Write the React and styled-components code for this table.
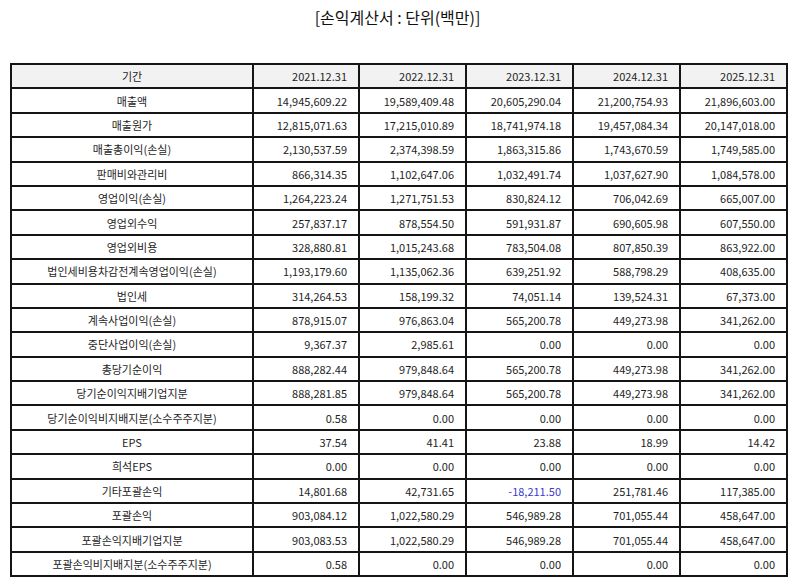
import React from "react";
import styled, { createGlobalStyle } from "styled-components";

const Global = createGlobalStyle`
  html, body { margin: 0; padding: 0; background: #fff; }
  body { font-family: "Noto Sans CJK KR", "Noto Sans", sans-serif; color: #222; }
`;

const Page = styled.div`
  width: 794px;
  height: 586px;
  padding: 0 9px 0 10px;
  box-sizing: border-box;
  display: flex;
  flex-direction: column;
`;

const Title = styled.h1`
  margin: 0;
  height: 63px;
  padding-top: 5px;
  box-sizing: border-box;
  font-size: 16px;
  font-weight: 400;
  text-align: center;
  line-height: 24px;
  color: #111;
`;

const Table = styled.table`
  width: 776px;
  border-collapse: collapse;
  table-layout: fixed;
  font-size: 11px;
`;

const Row = styled.tr`
  height: 24.4px;
`;

const Cell = styled.td`
  border: 2px solid #151515;
  padding: ${(p) => (p.$label ? "0 4px" : "0 11px 0 6px")};
  text-align: ${(p) => (p.$label ? "center" : "right")};
  background: ${(p) => (p.$head ? "#f2f2f2" : "#fff")};
  color: ${(p) => (p.$neg ? "#3a3acc" : "#1e1e1e")};
  font-weight: 400;
  white-space: nowrap;
  line-height: 14px;
`;

const cols = [242, 106, 107, 107, 107, 107];

const header = ["기간", "2021.12.31", "2022.12.31", "2023.12.31", "2024.12.31", "2025.12.31"];

const rows = [
  ["매출액", "14,945,609.22", "19,589,409.48", "20,605,290.04", "21,200,754.93", "21,896,603.00"],
  ["매출원가", "12,815,071.63", "17,215,010.89", "18,741,974.18", "19,457,084.34", "20,147,018.00"],
  ["매출총이익(손실)", "2,130,537.59", "2,374,398.59", "1,863,315.86", "1,743,670.59", "1,749,585.00"],
  ["판매비와관리비", "866,314.35", "1,102,647.06", "1,032,491.74", "1,037,627.90", "1,084,578.00"],
  ["영업이익(손실)", "1,264,223.24", "1,271,751.53", "830,824.12", "706,042.69", "665,007.00"],
  ["영업외수익", "257,837.17", "878,554.50", "591,931.87", "690,605.98", "607,550.00"],
  ["영업외비용", "328,880.81", "1,015,243.68", "783,504.08", "807,850.39", "863,922.00"],
  ["법인세비용차감전계속영업이익(손실)", "1,193,179.60", "1,135,062.36", "639,251.92", "588,798.29", "408,635.00"],
  ["법인세", "314,264.53", "158,199.32", "74,051.14", "139,524.31", "67,373.00"],
  ["계속사업이익(손실)", "878,915.07", "976,863.04", "565,200.78", "449,273.98", "341,262.00"],
  ["중단사업이익(손실)", "9,367.37", "2,985.61", "0.00", "0.00", "0.00"],
  ["총당기순이익", "888,282.44", "979,848.64", "565,200.78", "449,273.98", "341,262.00"],
  ["당기순이익지배기업지분", "888,281.85", "979,848.64", "565,200.78", "449,273.98", "341,262.00"],
  ["당기순이익비지배지분(소수주주지분)", "0.58", "0.00", "0.00", "0.00", "0.00"],
  ["EPS", "37.54", "41.41", "23.88", "18.99", "14.42"],
  ["희석EPS", "0.00", "0.00", "0.00", "0.00", "0.00"],
  ["기타포괄손익", "14,801.68", "42,731.65", "-18,211.50", "251,781.46", "117,385.00"],
  ["포괄손익", "903,084.12", "1,022,580.29", "546,989.28", "701,055.44", "458,647.00"],
  ["포괄손익지배기업지분", "903,083.53", "1,022,580.29", "546,989.28", "701,055.44", "458,647.00"],
  ["포괄손익비지배지분(소수주주지분)", "0.58", "0.00", "0.00", "0.00", "0.00"],
];

export default function App() {
  return (
    <>
      <Global />
      <Page>
        <Title>[손익계산서 : 단위(백만)]</Title>
        <Table>
          <colgroup>
            {cols.map((w, i) => (
              <col key={i} style={{ width: w }} />
            ))}
          </colgroup>
          <thead>
            <Row>
              {header.map((h, i) => (
                <Cell as="th" key={i} $head $label={i === 0}>
                  {h}
                </Cell>
              ))}
            </Row>
          </thead>
          <tbody>
            {rows.map((r, ri) => (
              <Row key={ri}>
                {r.map((v, ci) => (
                  <Cell key={ci} $label={ci === 0} $neg={v.startsWith("-")}>
                    {v}
                  </Cell>
                ))}
              </Row>
            ))}
          </tbody>
        </Table>
      </Page>
    </>
  );
}
